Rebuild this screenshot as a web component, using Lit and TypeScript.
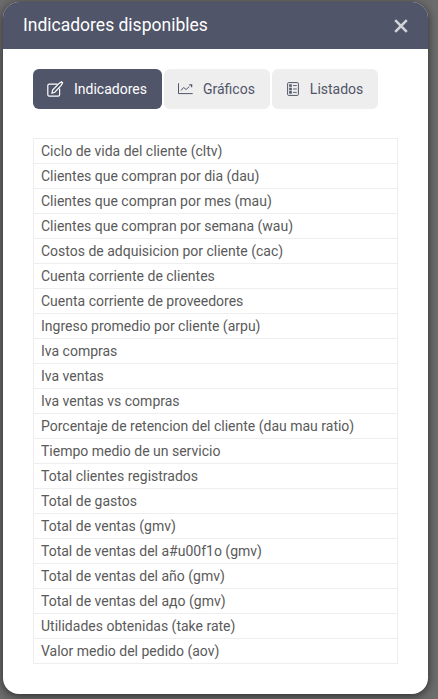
import { LitElement, html, css } from "lit";
import { customElement } from "lit/decorators.js";

const ITEMS = [
  "Ciclo de vida del cliente (cltv)",
  "Clientes que compran por dia (dau)",
  "Clientes que compran por mes (mau)",
  "Clientes que compran por semana (wau)",
  "Costos de adquisicion por cliente (cac)",
  "Cuenta corriente de clientes",
  "Cuenta corriente de proveedores",
  "Ingreso promedio por cliente (arpu)",
  "Iva compras",
  "Iva ventas",
  "Iva ventas vs compras",
  "Porcentaje de retencion del cliente (dau mau ratio)",
  "Tiempo medio de un servicio",
  "Total clientes registrados",
  "Total de gastos",
  "Total de ventas (gmv)",
  "Total de ventas del a#u00f1o (gmv)",
  "Total de ventas del año (gmv)",
  "Total de ventas del адо (gmv)",
  "Utilidades obtenidas (take rate)",
  "Valor medio del pedido (aov)",
];

@customElement("app-root")
export class AppRoot extends LitElement {
  static styles = css`
    :host {
      display: block;
      height: 699px;
      box-sizing: border-box;
      padding: 2px 10px 5px 3px;
      background: #6c6c6c;
      font-family: Roboto, "Noto Sans", sans-serif;
      color: #4f5464;
      overflow: hidden;
    }
    .modal {
      height: 692px;
      background: #fff;
      border-radius: 16px;
      overflow: hidden;
      box-shadow: 0 2px 10px rgba(0, 0, 0, 0.6);
      display: flex;
      flex-direction: column;
    }
    .head {
      height: 47px;
      flex: none;
      background: #505569;
      display: flex;
      align-items: center;
      justify-content: space-between;
      padding: 0 20px 0 20px;
      box-sizing: border-box;
    }
    .title {
      font-size: 17.5px;
      color: #fff;
      margin-bottom: 2px;
    }
    .close {
      width: 14px;
      height: 14px;
      display: block;
    }
    .body {
      padding: 20px 30px;
    }
    .tabs {
      display: flex;
      gap: 2px;
      margin-bottom: 29px;
    }
    .tab {
      height: 40px;
      box-sizing: border-box;
      border-radius: 6px;
      background: #eeeeee;
      color: #505569;
      font-size: 14px;
      display: flex;
      align-items: center;
      padding: 0 15px 0 14px;
      gap: 9px;
    }
    .tab.active {
      background: #505569;
      color: #fff;
    }
    .tab svg {
      display: block;
      flex: none;
    }
    .list {
      width: 365px;
      border-top: 1px solid #eeeeee;
    }
    .row {
      height: 25px;
      box-sizing: border-box;
      border: 1px solid #eeeeee;
      border-top: none;
      padding: 0 7px;
      font-size: 14px;
      line-height: 24px;
      color: #5a5a5a;
      white-space: nowrap;
    }
  `;

  render() {
    return html`
      <div class="modal">
        <div class="head">
          <span class="title">Indicadores disponibles</span>
          <svg class="close" viewBox="0 0 14 14" fill="none" stroke="#d2d3d9" stroke-width="2.6">
            <path d="M1.2 1.2 12.8 12.8M12.8 1.2 1.2 12.8" />
          </svg>
        </div>
        <div class="body">
          <div class="tabs">
            <div class="tab active">
              <svg width="18" height="18" viewBox="0 0 18 18" fill="none" stroke="currentColor" stroke-width="1.2">
                <path d="M10.5 4.2H2A1.4 1.4 0 0 0 .8 5.6v9.2A1.4 1.4 0 0 0 2 16.2h9.2a1.4 1.4 0 0 0 1.4-1.4V8.6" />
                <path d="M5 13.2l.6-3.2 6.4-6.6 2.6-1.6 1 1 -1.4 2.6 -6.4 6.8z" />
              </svg>
              Indicadores
            </div>
            <div class="tab">
              <svg width="16" height="16" viewBox="0 0 16 16" fill="none" stroke="currentColor" stroke-width="1">
                <path d="M.5 2.3V12.6H14.7" />
                <path d="M3 9.5l2.6-3 2.6 2 3-2.8" />
                <path d="M11.2 3.8h2.4v2.4" stroke-width="1.3" />
              </svg>
              Gráficos
            </div>
            <div class="tab">
              <svg width="15" height="16" viewBox="0 0 15 16" fill="none" stroke="currentColor" stroke-width="1">
                <rect x="1.6" y="1.6" width="10.8" height="12.8" rx="1" />
                <rect x="3.6" y="3.7" width="1.8" height="1.8" stroke-width=".8" />
                <rect x="3.6" y="7.1" width="1.8" height="1.8" stroke-width=".8" />
                <rect x="3.6" y="10.5" width="1.8" height="1.8" stroke-width=".8" />
                <path d="M7 4.6h3.8M7 8h3.8M7 11.4h3.8" stroke-width=".9" />
              </svg>
              Listados
            </div>
          </div>
          <div class="list">
            ${ITEMS.map((t) => html`<div class="row">${t}</div>`)}
          </div>
        </div>
      </div>
    `;
  }
}
